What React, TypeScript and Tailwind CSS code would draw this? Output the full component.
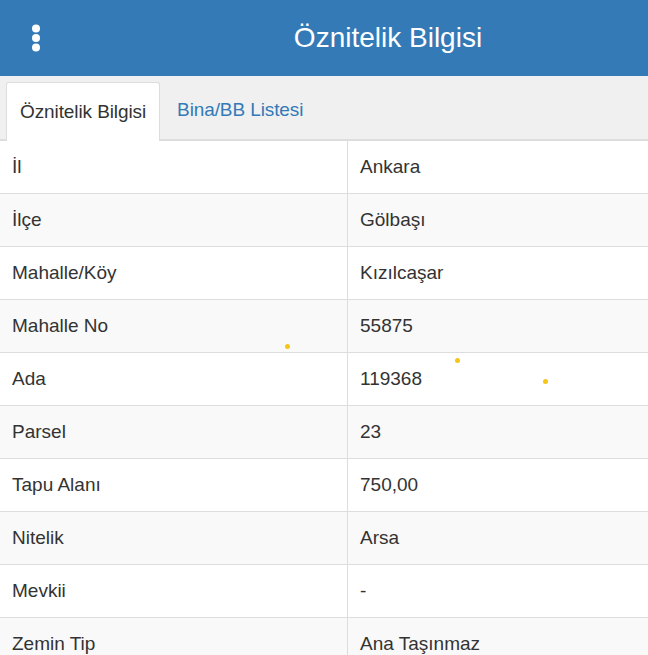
const rows: [string, string][] = [
  ["İl", "Ankara"],
  ["İlçe", "Gölbaşı"],
  ["Mahalle/Köy", "Kızılcaşar"],
  ["Mahalle No", "55875"],
  ["Ada", "119368"],
  ["Parsel", "23"],
  ["Tapu Alanı", "750,00"],
  ["Nitelik", "Arsa"],
  ["Mevkii", "-"],
  ["Zemin Tip", "Ana Taşınmaz"],
];

export default function App() {
  return (
    <div className="relative h-[655px] w-[648px] overflow-hidden bg-white font-['Liberation_Sans',Arial,sans-serif] text-[#333]">
      {/* Header */}
      <div className="flex h-[76px] items-center bg-[#337ab7] text-white">
        <div className="flex w-[72px] justify-center">
          <svg width="10" height="28" viewBox="0 0 10 28" fill="white">
            <circle cx="5" cy="4.5" r="4" />
            <circle cx="5" cy="14" r="4" />
            <circle cx="5" cy="23.5" r="4" />
          </svg>
        </div>
        <h1 className="flex-1 text-center text-[28px] leading-none">
          <span className="ml-[56px]">Öznitelik Bilgisi</span>
        </h1>
      </div>

      {/* Tabs */}
      <div className="flex h-[65px] items-end border-b-2 border-[#dddddd] bg-[#f0f0f0] pl-[6px]">
        <div className="-mb-[2px] flex h-[59px] items-center rounded-t-[3px] border border-b-0 border-[#dddddd] bg-white px-[13px] text-[19px] tracking-[-0.1px]">
          Öznitelik Bilgisi
        </div>
        <div className="flex h-[57px] items-center px-[17px] text-[19px] tracking-[-0.1px] text-[#337ab7]">
          Bina/BB Listesi
        </div>
      </div>

      {/* Table */}
      <div className="flex flex-col">
        {rows.map(([k, v], i) => (
          <div
            key={k}
            className={
              "grid h-[53px] grid-cols-[348px_1fr] border-b border-[#dddddd] text-[19px] " +
              (i % 2 === 1 ? "bg-[#f9f9f9]" : "bg-white")
            }
          >
            <div className="flex items-center border-r border-[#dddddd] pl-[12px]">{k}</div>
            <div className="flex items-center pl-[12px]">{v}</div>
          </div>
        ))}
      </div>

      {/* stray dots */}
      <span className="absolute left-[285px] top-[344px] h-[5px] w-[5px] rounded-full bg-[#f5c518]" />
      <span className="absolute left-[455px] top-[358px] h-[5px] w-[5px] rounded-full bg-[#f5c518]" />
      <span className="absolute left-[543px] top-[379px] h-[5px] w-[5px] rounded-full bg-[#f5c518]" />
    </div>
  );
}
